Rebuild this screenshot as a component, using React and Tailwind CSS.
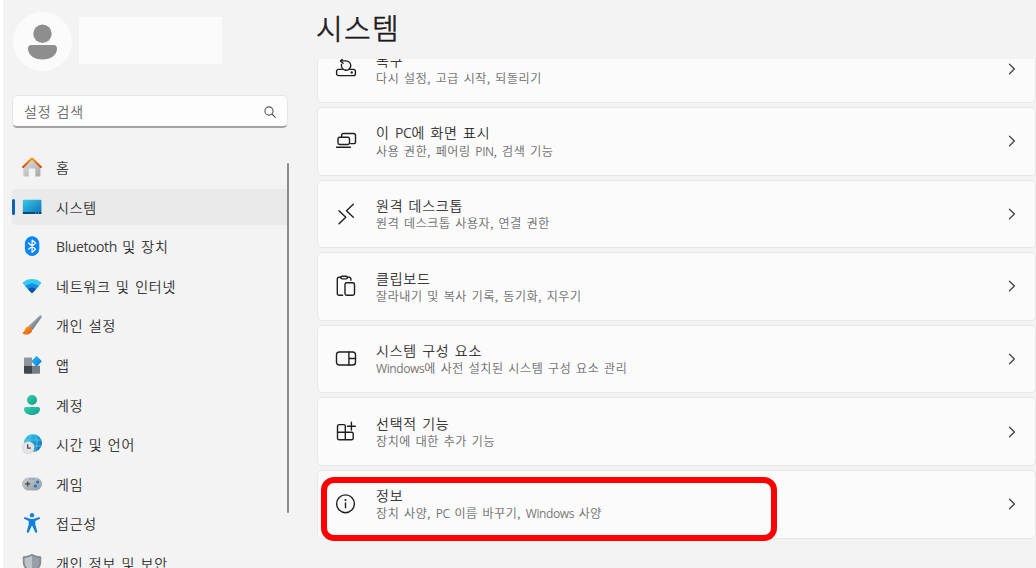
import clsx from 'clsx';

const HomeIcon = () => (
  <svg width="20" height="20" viewBox="0 0 20 20" fill="none">
    <defs>
      <linearGradient id="homeWall" x1="0" y1="0" x2="1" y2="1">
        <stop offset="0" stopColor="#e2e2e2" />
        <stop offset="1" stopColor="#a8a8a8" />
      </linearGradient>
      <linearGradient id="homeRoof" x1="0" y1="0" x2="0" y2="1">
        <stop offset="0" stopColor="#f59a1c" />
        <stop offset="1" stopColor="#d9481c" />
      </linearGradient>
    </defs>
    <path d="M10 2.2 18.400 9.500v9.100a.9.9 0 0 1-.9.9h-4.200v-7.200a.8.8 0 0 0-.8-.8H7.600a.8.8 0 0 0-.8.8v7.200H2.200a.9.9 0 0 1-.9-.9V9.500z" fill="url(#homeWall)" />
    <path d="M1.200 10 9.300 2a1 1 0 0 1 1.400 0L18.800 10" stroke="url(#homeRoof)" strokeWidth="2.2" strokeLinecap="round" strokeLinejoin="round" />
  </svg>
);

const SystemIcon = () => (
  <svg width="20" height="20" viewBox="0 0 20 20">
    <defs>
      <linearGradient id="sysScreen" x1="0" y1="0" x2="1" y2="1">
        <stop offset="0" stopColor="#37c9e9" />
        <stop offset="1" stopColor="#0c6fb5" />
      </linearGradient>
    </defs>
    <rect x="0.8" y="2.8" width="18.6" height="14.2" rx="1" fill="url(#sysScreen)" />
    <path d="M.8 15h18.6v1.2a.9.9 0 0 1-.9.9H1.7a.9.9 0 0 1-.9-.9z" fill="#0b4a78" />
    <path d="M13.2 15.5h1v1h-1zM16 15.5h1v1h-1z" fill="#7fd0f0" />
  </svg>
);

const BluetoothIcon = () => (
  <svg width="20" height="20" viewBox="0 0 20 20" fill="none">
    <rect x="2.9" y="0.3" width="14.4" height="19.6" rx="7.2" fill="#0a84fb" />
    <path d="M6.6 7l7 6.2-3.5 3.2V4l3.5 3-7 6.2" stroke="#fff" strokeWidth="1.2" strokeLinecap="round" strokeLinejoin="round" />
  </svg>
);

const NetworkIcon = () => (
  <svg width="20" height="20" viewBox="0 0 20 20">
    <path d="M.7 7.3Q.4 6.8.9 6.400C6 1.800 14 1.800 19.100 6.400q.5.4.2.900L10.700 16.700a1 1 0 0 1-1.400 0z" fill="#38c8f3" />
    <path d="M3.300 10.200c3.700-3.700 9.700-3.700 13.400 0l-6 6.500a1 1 0 0 1-1.400 0z" fill="#1590df" />
    <path d="M6 13.100c2.200-2.300 5.800-2.300 8 0l-3.300 3.600a1 1 0 0 1-1.400 0z" fill="#0b56a4" />
  </svg>
);

const BrushIcon = () => (
  <svg width="20" height="20" viewBox="0 0 20 20">
    <defs>
      <linearGradient id="brushTip" x1="0" y1="0" x2="1" y2="1">
        <stop offset="0" stopColor="#fba72a" />
        <stop offset="1" stopColor="#e2530f" />
      </linearGradient>
      <linearGradient id="brushHandle" x1="0" y1="0" x2="1" y2="1">
        <stop offset="0.3" stopColor="#a9b0b7" />
        <stop offset="0.8" stopColor="#5f666e" />
      </linearGradient>
    </defs>
    <path d="M17.300.9c.8-.7 1.700-.6 2.100-.1.500.5.400 1.300-.1 2L10.600 15.100 6.300 11.300z" fill="url(#brushHandle)" />
    <path d="M6 11.600c1.800-.4 4.300 1.700 4.100 3.700-.3 3.700-5.200 5.400-9.300 3.400-.5-.3-.3-.9.200-1.100 2-.9 1.500-5.200 5-6z" fill="url(#brushTip)" />
  </svg>
);

const AppsIcon = () => (
  <svg width="20" height="20" viewBox="0 0 20 20">
    <defs>
      <linearGradient id="appDiamond" x1="0" y1="0" x2="1" y2="1">
        <stop offset="0" stopColor="#2fc2f7" />
        <stop offset="1" stopColor="#0a74d4" />
      </linearGradient>
    </defs>
    <path d="M3 2.500h7v8.200H2V3.500a1 1 0 0 1 1-1z" fill="#90969d" />
    <path d="M2 10.700h8v8.100H3a1 1 0 0 1-1-1z" fill="#41464b" />
    <path d="M10 10.700h8v7.100a1 1 0 0 1-1 1h-7z" fill="#787e86" />
    <path d="M13.900 1.400a1 1 0 0 1 1.400 0l4 4.200a1 1 0 0 1 0 1.400l-4 4.100a1 1 0 0 1-1.400 0L9.900 7a1 1 0 0 1 0-1.400z" fill="url(#appDiamond)" />
  </svg>
);

const AccountIcon = () => (
  <svg width="20" height="20" viewBox="0 0 20 20">
    <defs>
      <linearGradient id="accountFill" x1="0" y1="0" x2="1" y2="1">
        <stop offset="0" stopColor="#34cfae" />
        <stop offset="1" stopColor="#119a89" />
      </linearGradient>
    </defs>
    <circle cx="10" cy="5" r="5" fill="url(#accountFill)" />
    <path d="M4 12h12a2 2 0 0 1 2 2c0 3.800-3.500 6-8 6s-8-2.200-8-6a2 2 0 0 1 2-2z" fill="url(#accountFill)" />
  </svg>
);

const TimeIcon = () => (
  <svg width="20" height="20" viewBox="0 0 20 20" fill="none">
    <defs>
      <linearGradient id="globe" x1="0" y1="0" x2="1" y2="1">
        <stop offset="0" stopColor="#39cdec" />
        <stop offset="1" stopColor="#0b69b4" />
      </linearGradient>
    </defs>
    <circle cx="11" cy="9" r="9" fill="url(#globe)" />
    <path d="M2.600 6h16.800M2.600 12h16.800" stroke="#5fd4ee" strokeWidth=".7" />
    <ellipse cx="11" cy="9" rx="4" ry="8.700" stroke="#5fd4ee" strokeWidth=".7" />
    <circle cx="6.200" cy="13.600" r="6.100" fill="#e4e4e6" stroke="#c4c8cc" strokeWidth=".4" />
    <path d="M5.700 10.200v4h3.200" stroke="#4a4f55" strokeWidth="1.300" />
  </svg>
);

const GameIcon = () => (
  <svg width="20" height="20" viewBox="0 0 20 20" fill="none">
    <defs>
      <linearGradient id="pad" x1="0" y1="0" x2="1" y2="1">
        <stop offset="0" stopColor="#c9cdd1" />
        <stop offset="1" stopColor="#949aa1" />
      </linearGradient>
    </defs>
    <rect x="0" y="3.500" width="20" height="13" rx="6.500" fill="url(#pad)" />
    <path d="M5.700 7.400v5M3.200 9.900h5" stroke="#42474d" strokeWidth="1.200" />
    <path d="M7.800 5h1M10.800 5h1" stroke="#5a6067" />
    <circle cx="15.600" cy="8" r="1.600" fill="#1378d2" />
    <circle cx="13.400" cy="12" r="1.600" fill="#1378d2" />
  </svg>
);

const AccessibilityIcon = () => (
  <svg width="20" height="20" viewBox="0 0 20 20">
    <circle cx="10" cy="2.300" r="2.200" fill="#1784dc" />
    <path d="M3.300 4.200 8 5.800c1.200.4 2.800.4 4 0l4.700-1.600c1.300-.4 1.900 1.400.7 1.900L13.300 8v3.400l2 7c.3 1.400-1.700 2-2.200.7L10.300 13h-.6l-2.800 6.100c-.5 1.300-2.500.7-2.200-.7l2-7V8L2.600 6.100c-1.200-.5-.6-2.300.7-1.900z" fill="#1181da" />
  </svg>
);

const ShieldIcon = () => (
  <svg width="20" height="20" viewBox="0 0 20 20">
    <path d="M10 .8c2.500 1.700 5.200 2.400 8.400 2.500.5 0 .8.3.8.7V9c0 5.200-3.700 8.800-9.200 10.800C4.500 17.800.8 14.200.8 9V4c0-.4.3-.7.800-.7C4.800 3.200 7.500 2.500 10 .8z" fill="#858b92" />
    <path d="M10 2.700c2.300 1.300 4.600 2 7.400 2.200V9c0 4.200-2.800 7-7.400 8.900z" fill="#989fa6" />
    <path d="M10 2.700C7.700 4 5.400 4.700 2.600 4.900V9c0 4.200 2.800 7 7.400 8.900z" fill="#bfc4c9" />
  </svg>
);

const LineIcon = ({ children }) => (
  <svg width="22" height="22" viewBox="0 0 22 22" fill="none" stroke="#1f1f1f" strokeWidth="1.4" strokeLinecap="round" strokeLinejoin="round" className="shrink-0">
    {children}
  </svg>
);

const RecoveryIcon = () => (
  <LineIcon>
    <path d="M7.200 11.400H3.500A1.900 1.900 0 0 0 1.600 13.300v2.400a1.900 1.900 0 0 0 1.900 1.900h15a1.900 1.900 0 0 0 1.900-1.900v-2.400a1.900 1.900 0 0 0-1.900-1.900h-3.700" />
    <path d="M5.600 2.900H11a4.700 4.700 0 1 1-4.500 3.600" />
    <path d="M8 .6 5.600 2.900 8 5.200" />
    <circle cx="16.700" cy="14.500" r=".5" fill="#1f1f1f" />
  </LineIcon>
);

const ProjectIcon = () => (
  <LineIcon>
    <path d="M6.600 6.500V5.400a1.900 1.900 0 0 1 1.900-1.900h10.100a1.900 1.900 0 0 1 1.900 1.900v6.300a1.900 1.900 0 0 1-1.900 1.900h-3" />
    <rect x="3" y="7.200" width="11.500" height="7.300" rx="1.700" />
    <path d="M1.600 17.200h13.800" />
  </LineIcon>
);

const RemoteIcon = () => (
  <LineIcon>
    <path d="M4 7.700l6.800 6.500L4 20.700M18.300 1.300l-6.800 6.400 6.800 6.600" />
  </LineIcon>
);

const ClipboardIcon = () => (
  <LineIcon>
    <path d="M7.600 20.300H4a1.700 1.700 0 0 1-1.700-1.700V4A1.700 1.700 0 0 1 4 2.300h1.700M12.500 2.300h1.700A1.700 1.700 0 0 1 15.900 4v1.200" />
    <rect x="5.800" y="1.200" width="6.600" height="2.700" rx="1.300" />
    <rect x="10" y="7.700" width="9.500" height="12.600" rx="1.700" />
  </LineIcon>
);

const ComponentsIcon = () => (
  <LineIcon>
    <rect x="1.500" y="4" width="19" height="13" rx="2.800" />
    <path d="M13.900 4v13M13.900 10.500h6.600" />
  </LineIcon>
);

const FeaturesIcon = () => (
  <LineIcon>
    <path d="M10.300 18.800V5a1.400 1.400 0 0 0-1.400-1.400H4.100A1.600 1.600 0 0 0 2.500 5.200v12A1.600 1.600 0 0 0 4.100 18.800h12.500a1.600 1.600 0 0 0 1.600-1.600v-4.600a1.400 1.400 0 0 0-1.400-1.400H2.500" />
    <path d="M16.400 1.300v7.800M12.500 5.200h7.800" />
  </LineIcon>
);

const InfoIcon = () => (
  <LineIcon>
    <circle cx="10.500" cy="10.800" r="8.900" />
    <path d="M10.500 10v4.800" />
    <circle cx="10.500" cy="7" r=".4" fill="#1f1f1f" />
  </LineIcon>
);

const ChevronIcon = () => (
  <svg width="8" height="12" viewBox="0 0 8 12" fill="none" stroke="#444" strokeWidth="1.3" strokeLinecap="round" strokeLinejoin="round">
    <path d="M1.500 1.200l4.900 4.800-4.900 4.800" />
  </svg>
);

// Latin words are set tighter than the Korean around them
const Label = ({ text }) =>
  text.split(/([A-Za-z]+)/).map((part, i) =>
    /^[A-Za-z]/.test(part) ? (
      <span key={i} className="font-['Open_Sans','Noto_Sans',sans-serif] font-normal opacity-85 tracking-[-0.4px] [-webkit-text-stroke:0px]">{part}</span>
    ) : (
      part
    )
  );

const navItems = [
  { label: '홈', Icon: HomeIcon },
  { label: '시스템', Icon: SystemIcon, active: true },
  { label: 'Bluetooth 및 장치', Icon: BluetoothIcon },
  { label: '네트워크 및 인터넷', Icon: NetworkIcon },
  { label: '개인 설정', Icon: BrushIcon },
  { label: '앱', Icon: AppsIcon },
  { label: '계정', Icon: AccountIcon },
  { label: '시간 및 언어', Icon: TimeIcon },
  { label: '게임', Icon: GameIcon },
  { label: '접근성', Icon: AccessibilityIcon },
  { label: '개인 정보 및 보안', Icon: ShieldIcon },
];

const cards = [
  { title: '복구', desc: '다시 설정, 고급 시작, 되돌리기', Icon: RecoveryIcon },
  { title: '이 PC에 화면 표시', desc: '사용 권한, 페어링 PIN, 검색 기능', Icon: ProjectIcon },
  { title: '원격 데스크톱', desc: '원격 데스크톱 사용자, 연결 권한', Icon: RemoteIcon },
  { title: '클립보드', desc: '잘라내기 및 복사 기록, 동기화, 지우기', Icon: ClipboardIcon },
  { title: '시스템 구성 요소', desc: 'Windows에 사전 설치된 시스템 구성 요소 관리', Icon: ComponentsIcon },
  { title: '선택적 기능', desc: '장치에 대한 추가 기능', Icon: FeaturesIcon },
  { title: '정보', desc: '장치 사양, PC 이름 바꾸기, Windows 사양', Icon: InfoIcon },
];

const Sidebar = () => (
  <aside className="w-[286px] shrink-0 pl-[9px] flex flex-col">
    <div className="flex gap-[7px] pt-3 pl-px">
      <div className="w-[59px] h-[59px] rounded-full bg-[#fbfbfb] flex items-center justify-center">
        <svg width="30" height="36" viewBox="0 0 30 36" fill="#8e8e8e">
          <circle cx="14.500" cy="9.700" r="9.200" />
          <path d="M3.500 21h22a3.500 3.500 0 0 1 3.500 3.500C29 31 23 35.500 14.500 35.500S0 31 0 24.500A3.500 3.500 0 0 1 3.500 21z" />
        </svg>
      </div>
      <div className="w-[143px] h-[47px] mt-[5px] bg-[#fbfbfb]" />
    </div>

    <div className="mt-[24px] h-[33px] w-[276px] shrink-0 rounded-[5px] border border-[#e6e6e6] border-b-2 border-b-[#a3a3a3] bg-[#fdfdfd] flex items-center justify-between pl-[11px] pr-[11px]">
      <span className="text-sm leading-5 text-[#5c5c5c] font-light tracking-[0.75px] [word-spacing:1.5px] [-webkit-text-stroke:0.2px]">설정 검색</span>
      <svg width="12" height="12" viewBox="0 0 12 12" fill="none" stroke="#555" strokeWidth="1.1" strokeLinecap="round" className="mt-[2px]">
        <circle cx="5" cy="5" r="4.100" />
        <path d="M8 8l3.300 3.300" />
      </svg>
    </div>

    <div className="mt-[21px] flex flex-1 min-h-0">
      <nav className="w-[275px] shrink-0 flex flex-col gap-[3.6px] overflow-hidden">
        {navItems.map(({ label, Icon, active }) => (
          <div key={label} className={clsx('h-9 shrink-0 flex items-center rounded-l-[4px]', active && 'bg-[#eaeaea]')}>
            <span className={clsx('w-[3px] h-4 rounded-full mr-[7px]', active && 'bg-[#0a63bd]')} />
            <Icon />
            <span className="ml-[14px] text-sm leading-5 text-[#1a1a1a] font-light tracking-[0.8px] [word-spacing:1.5px] [-webkit-text-stroke:0.2px] whitespace-nowrap">
              <Label text={label} />
            </span>
          </div>
        ))}
      </nav>
      <div className="mt-[14px] w-[2px] h-[350px] rounded-full bg-[#8b8b8b]" />
    </div>
  </aside>
);

const App = () => {
  return (
    <div className="w-[1036px] h-[568px] overflow-hidden flex bg-[#f3f3f3] border-l-[3px] border-white font-['Noto_Sans_CJK_KR',sans-serif]">
      <Sidebar />
      <main className="flex-1 min-w-0 pl-[28px] flex flex-col">
        <h1 className="h-[59px] shrink-0 pt-[7px] -ml-px text-[29px] leading-[40px] tracking-[1.3px] font-light [-webkit-text-stroke:0.6px] text-[#1a1a1a]">시스템</h1>
        <div className="flex-1 min-h-0 overflow-hidden">
          <div className="-mt-[24.6px] flex flex-col gap-[4px]">
            {cards.map(({ title, desc, Icon }, idx) => (
              <div key={title} className="relative h-[68.6px] shrink-0 rounded-[5px] border border-[#e7e7e7] bg-[#fbfbfb] flex items-center pl-[17px] pr-[19px]">
                <Icon />
                <div className="ml-[19px] flex-1 whitespace-nowrap font-light [word-spacing:1.5px] [-webkit-text-stroke:0.2px]">
                  <div className="text-sm leading-[18px] text-[#1a1a1a] tracking-[0.75px]"><Label text={title} /></div>
                  <div className="text-xs leading-[17px] text-[#5f5f5f] tracking-[0.6px]"><Label text={desc} /></div>
                </div>
                <ChevronIcon />
                {idx === cards.length - 1 && (
                  <div className="absolute left-[3px] top-[6px] w-[456px] h-[64px] rounded-[13px] border-[6px] border-[#fe0000]" />
                )}
              </div>
            ))}
          </div>
        </div>
      </main>
    </div>
  );
};

export default App;
